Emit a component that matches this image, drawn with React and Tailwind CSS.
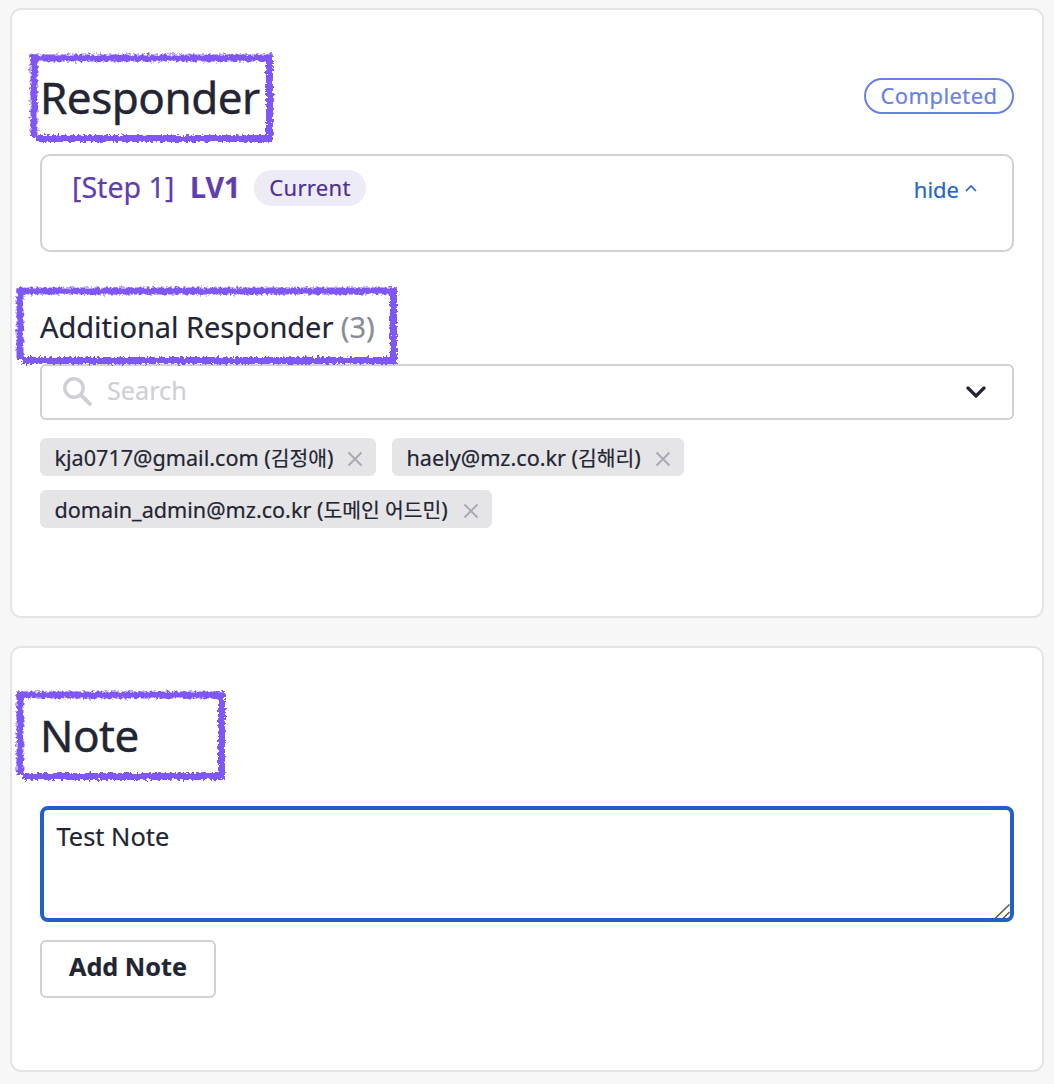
import React from 'react';

function SketchFrame({ className, w, h, seed }) {
  return (
    <svg className={`pointer-events-none absolute z-10 ${className}`} width={w} height={h} viewBox={`0 0 ${w} ${h}`} fill="none" stroke="#8057f7">
      <filter id={`rough-${seed}`} x="0" y="0" width={w} height={h} filterUnits="userSpaceOnUse" colorInterpolationFilters="sRGB">
        <feTurbulence type="fractalNoise" baseFrequency="0.36" numOctaves="2" seed={seed} result="noise" />
        <feDisplacementMap in="SourceGraphic" in2="noise" scale="6" xChannelSelector="R" yChannelSelector="G" />
      </filter>
      <g filter={`url(#rough-${seed})`} strokeWidth="7">
        <path d={`M2.5 6H${w - 2}`} />
        <path d={`M${w - 5.5} 2.5V${h - 3}`} />
        <path d={`M${w - 2} ${h - 6.5}H8`} />
        <path d={`M6 ${h - 8}V2.5`} />
      </g>
    </svg>
  );
}

function Tag({ email, name, className }) {
  return (
    <span className={`flex h-[38px] items-center justify-between rounded-md bg-[#e5e5e7] pr-[13px] pl-[14.5px] text-[21.6px] leading-[38px] whitespace-nowrap ${className}`}>
      <span className="pt-px">
        {email} (<span className="text-[20.4px]">{name}</span>)
      </span>
      <svg className="mt-1" width="16" height="16" viewBox="0 0 16 16" stroke="#a6a8b3" strokeWidth="1.8">
        <path d="M1.5 1.5 14.5 14.5M14.5 1.5 1.5 14.5" />
      </svg>
    </span>
  );
}

export default function App() {
  return (
    <main className="h-[1084px] w-[1054px] bg-[#f7f7f7] px-[10px] pt-2 text-[#232533] [-webkit-text-stroke:0.2px] [font-family:'Noto_Sans','Noto_Sans_CJK_KR',sans-serif]">
      <section className="relative h-[610px] rounded-[11px] border-2 border-[#e5e5e6] bg-white px-7 pt-[56px]">
        <SketchFrame className="top-[42px] left-[16px]" w={247} h={93} seed={3} />
        <SketchFrame className="top-[275px] left-[2px]" w={385} h={82} seed={8} />
        <header className="flex h-[60px] items-center justify-between">
          <h2 className="pt-0.5 text-[44px] leading-[60px] tracking-[-0.5px] [-webkit-text-stroke:0.4px]">Responder</h2>
          <span className="flex h-9 w-[150px] items-center justify-center rounded-full border-2 border-[#6981e3] pb-0.5 text-[22px] tracking-[0.4px] text-[#6981e3]">Completed</span>
        </header>
        <div className="mt-[28px] flex h-[98px] items-start rounded-[10px] border-2 border-[#d0d0d7] pt-[14px] pr-[34px] pl-[30px]">
          <span className="-mt-px w-[102px] text-[28.6px] leading-9 whitespace-nowrap text-[#5f3daf]">[Step 1]</span>
          <strong className="-mt-px ml-4 w-[48px] text-[28.6px] leading-9 font-bold text-[#5f3daf]">LV1</strong>
          <span className="ml-4 h-9 w-28 rounded-full bg-[#edebf6] text-center text-[22px] leading-[35px] tracking-[0.3px] text-[#4f2f96]">Current</span>
          <button className="ml-auto flex text-[22px] leading-[38px] text-[#2466c8]">
            hide
            <svg className="mt-[14px] mr-px ml-[6px]" width="12" height="9" viewBox="0 0 12 9" fill="none" stroke="currentColor" strokeWidth="1.7">
              <path d="M1 7 6 2 11 7" />
            </svg>
          </button>
        </div>
        <h3 className="mt-[55px] text-[29px] leading-10 tracking-[-0.04px] whitespace-nowrap">
          Additional Responder <span className="text-[#898b98]">(3)</span>
        </h3>
        <div className="mt-[17px] flex h-14 items-center rounded-md border-2 border-[#d0d0d7] pr-[26px] pl-[21px] text-[25.2px] leading-[50px] text-[#cfcfd7]">
          <svg width="30" height="30" viewBox="0 0 30 30" fill="none" stroke="currentColor" strokeWidth="3.4">
            <circle cx="11" cy="11" r="9.2" />
            <path d="m17.8 17.8 10.3 10.3" strokeWidth="4" />
          </svg>
          <span className="-mt-1 ml-[14px] h-[50px]">Search</span>
          <svg className="ml-auto text-[#232533]" width="20" height="14" viewBox="0 0 20 14" fill="none" stroke="currentColor" strokeWidth="3.2" strokeLinecap="round">
            <path d="m2 3 8 8 8-8" />
          </svg>
        </div>
        <div className="mt-[18px] flex flex-wrap gap-x-4 gap-y-[14px]">
          <Tag className="w-[336px]" email="kja0717@gmail.com" name="김정애" />
          <Tag className="w-[292px]" email="haely@mz.co.kr" name="김해리" />
          <Tag className="w-[452px]" email="domain_admin@mz.co.kr" name="도메인 어드민" />
        </div>
      </section>

      <section className="relative mt-7 h-[426px] rounded-[11px] border-2 border-[#e5e5e6] bg-white px-7 pt-[57px]">
        <SketchFrame className="top-[41px] left-[2px]" w={213} h={94} seed={14} />
        <h2 className="text-[44px] leading-[60px] tracking-[-0.5px] [-webkit-text-stroke:0.4px]">Note</h2>
        <div className="relative mt-[41px] h-[116px]">
          <textarea className="block h-full w-full resize-none rounded-lg border-4 border-[#2160c9] bg-white px-[12.5px] py-2 text-[25.4px] leading-[36px] outline-none" defaultValue="Test Note" />
          <svg className="absolute right-1 bottom-[3px]" width="16" height="16" viewBox="0 0 16 16" fill="none" stroke="#555" strokeWidth="1.5">
            <path d="M1 15.5 15.5 1.5M9 15.5 15.5 9" />
          </svg>
        </div>
        <button className="mt-[18px] block h-[58px] w-44 rounded-md border-2 border-[#d0d0d7] pb-[6px] text-[25.2px] leading-[48px] font-bold">Add Note</button>
      </section>
    </main>
  );
}
